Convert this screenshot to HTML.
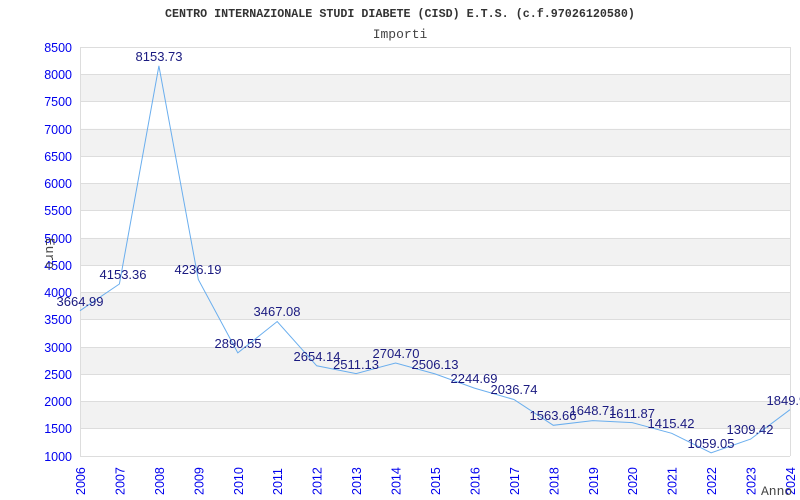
<!DOCTYPE html>
<html><head><meta charset="utf-8"><style>body{margin:0;background:#fff}svg{display:block}</style></head><body>
<svg width="800" height="500" xmlns="http://www.w3.org/2000/svg">
<rect width="800" height="500" fill="#fff"/>
<text x="400" y="17" text-anchor="middle" font-family="Liberation Mono, monospace" font-weight="bold" font-size="11.7" fill="#333">CENTRO INTERNAZIONALE STUDI DIABETE (CISD) E.T.S. (c.f.97026120580)</text>
<text x="400" y="38" text-anchor="middle" font-family="Liberation Mono, monospace" font-size="13" fill="#444">Importi</text>
<g fill="#f2f2f2">
<rect x="80" y="74.3" width="710" height="27.3"/>
<rect x="80" y="128.8" width="710" height="27.3"/>
<rect x="80" y="183.3" width="710" height="27.3"/>
<rect x="80" y="237.9" width="710" height="27.3"/>
<rect x="80" y="292.4" width="710" height="27.3"/>
<rect x="80" y="347" width="710" height="27.3"/>
<rect x="80" y="401.5" width="710" height="27.3"/>
</g>
<g stroke="#ddd" stroke-width="1">
<line x1="80" x2="790" y1="47.5" y2="47.5"/><line x1="80" x2="790" y1="74.5" y2="74.5"/><line x1="80" x2="790" y1="101.5" y2="101.5"/><line x1="80" x2="790" y1="129.5" y2="129.5"/><line x1="80" x2="790" y1="156.5" y2="156.5"/><line x1="80" x2="790" y1="183.5" y2="183.5"/><line x1="80" x2="790" y1="210.5" y2="210.5"/><line x1="80" x2="790" y1="238.5" y2="238.5"/><line x1="80" x2="790" y1="265.5" y2="265.5"/><line x1="80" x2="790" y1="292.5" y2="292.5"/><line x1="80" x2="790" y1="319.5" y2="319.5"/><line x1="80" x2="790" y1="347.5" y2="347.5"/><line x1="80" x2="790" y1="374.5" y2="374.5"/><line x1="80" x2="790" y1="401.5" y2="401.5"/><line x1="80" x2="790" y1="428.5" y2="428.5"/><line x1="80" x2="790" y1="456.5" y2="456.5"/>
<line x1="80.5" x2="80.5" y1="47" y2="456"/><line x1="790.5" x2="790.5" y1="47" y2="456"/>
</g>
<g font-family="Liberation Sans, sans-serif" font-size="12.5" fill="#0000ee" text-anchor="end">
<text x="72" y="52">8500</text><text x="72" y="79">8000</text><text x="72" y="106">7500</text><text x="72" y="134">7000</text><text x="72" y="161">6500</text><text x="72" y="188">6000</text><text x="72" y="215">5500</text><text x="72" y="243">5000</text><text x="72" y="270">4500</text><text x="72" y="297">4000</text><text x="72" y="324">3500</text><text x="72" y="352">3000</text><text x="72" y="379">2500</text><text x="72" y="406">2000</text><text x="72" y="433">1500</text><text x="72" y="461">1000</text>
</g>
<text transform="translate(46,238) rotate(90)" font-family="Liberation Mono, monospace" font-size="13" fill="#444">Euro</text>
<polyline fill="none" stroke="#6aaeee" stroke-width="1" points="80,310.7 119.4,284 158.9,65.9 198.3,279.5 237.8,352.9 277.2,321.5 316.7,365.8 356.1,373.6 395.6,363 435,373.9 474.4,388.1 513.9,399.5 553.3,425.3 592.8,420.6 632.2,422.6 671.7,433.3 711.1,452.8 750.6,439.1 790,409.7"/>
<g font-family="Liberation Sans, sans-serif" font-size="13" fill="#1a1a80" text-anchor="middle">
<text x="80" y="306">3664.99</text><text x="123" y="279">4153.36</text><text x="159" y="61">8153.73</text><text x="198" y="274">4236.19</text><text x="238" y="348">2890.55</text><text x="277" y="316">3467.08</text><text x="317" y="361">2654.14</text><text x="356" y="369">2511.13</text><text x="396" y="358">2704.70</text><text x="435" y="369">2506.13</text><text x="474" y="383">2244.69</text><text x="514" y="394">2036.74</text><text x="553" y="420">1563.66</text><text x="593" y="415">1648.71</text><text x="632" y="418">1611.87</text><text x="671" y="428">1415.42</text><text x="711" y="448">1059.05</text><text x="750" y="434">1309.42</text><text x="790" y="405">1849.90</text>
</g>
<g font-family="Liberation Sans, sans-serif" font-size="12.5" fill="#0000ee">
<text transform="translate(85,495) rotate(-90)">2006</text><text transform="translate(124.4,495) rotate(-90)">2007</text><text transform="translate(163.9,495) rotate(-90)">2008</text><text transform="translate(203.3,495) rotate(-90)">2009</text><text transform="translate(242.8,495) rotate(-90)">2010</text><text transform="translate(282.2,495) rotate(-90)">2011</text><text transform="translate(321.7,495) rotate(-90)">2012</text><text transform="translate(361.1,495) rotate(-90)">2013</text><text transform="translate(400.6,495) rotate(-90)">2014</text><text transform="translate(440,495) rotate(-90)">2015</text><text transform="translate(479.4,495) rotate(-90)">2016</text><text transform="translate(518.9,495) rotate(-90)">2017</text><text transform="translate(558.3,495) rotate(-90)">2018</text><text transform="translate(597.8,495) rotate(-90)">2019</text><text transform="translate(637.2,495) rotate(-90)">2020</text><text transform="translate(676.7,495) rotate(-90)">2021</text><text transform="translate(716.1,495) rotate(-90)">2022</text><text transform="translate(755.6,495) rotate(-90)">2023</text><text transform="translate(795,495) rotate(-90)">2024</text>
</g>
<text x="761" y="495" font-family="Liberation Mono, monospace" font-size="13" fill="#444">Anno</text>
</svg>
</body></html>
